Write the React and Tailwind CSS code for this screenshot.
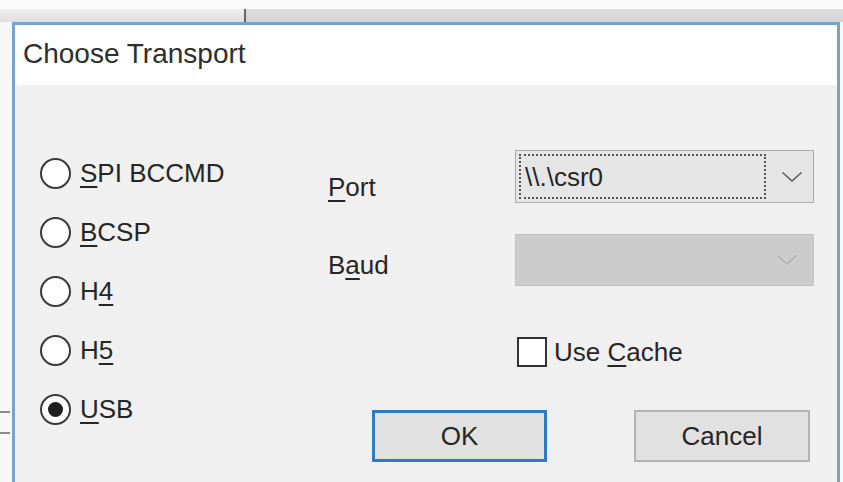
import React from "react";

function Radio({ checked, children }) {
  return (
    <div className="flex items-center h-[30px]">
      <div className="w-[31px] h-[31px] rounded-full border-2 border-[#3a3a3a] bg-white flex items-center justify-center">
        {checked && <div className="w-[15px] h-[15px] rounded-full bg-[#1e1e1e]" />}
      </div>
      <div className="ml-[9px] text-[26px] leading-none text-[#262626]">{children}</div>
    </div>
  );
}

function U({ children }) {
  return <span className="underline decoration-2 underline-offset-[4px]">{children}</span>;
}

function Chevron({ color }) {
  return (
    <svg width="22" height="12" viewBox="0 0 22 12" fill="none">
      <path d="M1.5 1.5 L11 10 L20.5 1.5" stroke={color} strokeWidth="1.6" />
    </svg>
  );
}

export default function App() {
  return (
    <div className="w-[843px] h-[482px] overflow-hidden flex flex-col bg-[#f4f4f4] font-['Liberation_Sans',Arial,sans-serif]">
      {/* background window strip on top */}
      <div className="h-[22px] flex flex-col shrink-0">
        <div className="h-[9px] bg-[#fbfbfb]" />
        <div className="flex-1 flex">
          <div className="w-[244px] bg-gradient-to-b from-[#efefef] to-[#dedede]" />
          <div className="w-[2px] bg-[#666]" />
          <div className="flex-1 bg-gradient-to-b from-[#e0e0e0] to-[#d2d2d2]" />
        </div>
      </div>

      <div className="flex flex-1">
        {/* left background strip */}
        <div className="w-[12px] bg-[#f7f7f7] flex flex-col">
          <div className="h-[389px]" />
          <div className="h-[2px] w-[10px] bg-[#8a8a8a]" />
          <div className="h-[19px]" />
          <div className="h-[2px] w-[10px] bg-[#8a8a8a]" />
        </div>

        {/* dialog */}
        <div className="w-[828px] flex flex-col border-t-[3px] border-l-[3px] border-r-[3px] border-[#78a3cd]">
          <div className="h-[60px] bg-white flex items-center pl-[8px] pb-[2px]">
            <span className="text-[28px] text-[#2e2e2e] leading-none">Choose Transport</span>
          </div>
          <div className="flex-1 bg-[#f0f0f0] flex">
            {/* radio column */}
            <div className="w-[300px] pl-[25px] pt-[73px] flex flex-col gap-[29px]">
              <Radio><U>S</U>PI BCCMD</Radio>
              <Radio><U>B</U>CSP</Radio>
              <Radio>H<U>4</U></Radio>
              <Radio>H<U>5</U></Radio>
              <Radio checked><U>U</U>SB</Radio>
            </div>

            {/* right column */}
            <div className="flex-1 flex flex-col pt-[65px] text-[#262626]">
              <div className="flex h-[53px]">
                <div className="w-[200px] pl-[13px] pt-[24px] text-[26px] leading-none">
                  <U>P</U>ort
                </div>
                <div className="w-[299px] h-[53px] bg-[#e5e5e5] border border-[#acacac] flex items-center">
                  <div className="ml-[3px] w-[247px] h-[45px] border-2 border-dotted border-[#555] flex items-center pl-[4px] text-[26px] leading-none">
                    {"\\\\.\\csr0"}
                  </div>
                  <div className="flex-1 flex justify-center pl-[4px]">
                    <Chevron color="#5a5a5a" />
                  </div>
                </div>
              </div>

              <div className="flex h-[52px] mt-[31px]">
                <div className="w-[200px] pl-[13px] pt-[18px] text-[26px] leading-none">
                  B<U>a</U>ud
                </div>
                <div className="w-[299px] h-[52px] bg-[#cccccc] border border-[#c2c2c2] flex items-center justify-end pr-[15px]">
                  <Chevron color="#b0b0b0" />
                </div>
              </div>

              <div className="flex items-center mt-[51px] h-[30px] pl-[202px]">
                <div className="w-[30px] h-[30px] border-2 border-[#333] bg-white" />
                <div className="ml-[7px] text-[26px] leading-none">
                  Use <U>C</U>ache
                </div>
              </div>

              <div className="flex mt-[43px] pl-[57px]">
                <div className="w-[175px] h-[52px] border-[3px] border-[#2f7bc8] bg-[#e1e1e1] flex items-center justify-center text-[26px] leading-none">
                  OK
                </div>
                <div className="ml-[87px] w-[176px] h-[52px] border-2 border-[#b4b4b4] bg-[#e1e1e1] flex items-center justify-center text-[26px] leading-none">
                  Cancel
                </div>
              </div>
            </div>
          </div>
        </div>

        {/* right background strip */}
        <div className="flex-1 bg-[#f8f8f8]" />
      </div>
    </div>
  );
}
